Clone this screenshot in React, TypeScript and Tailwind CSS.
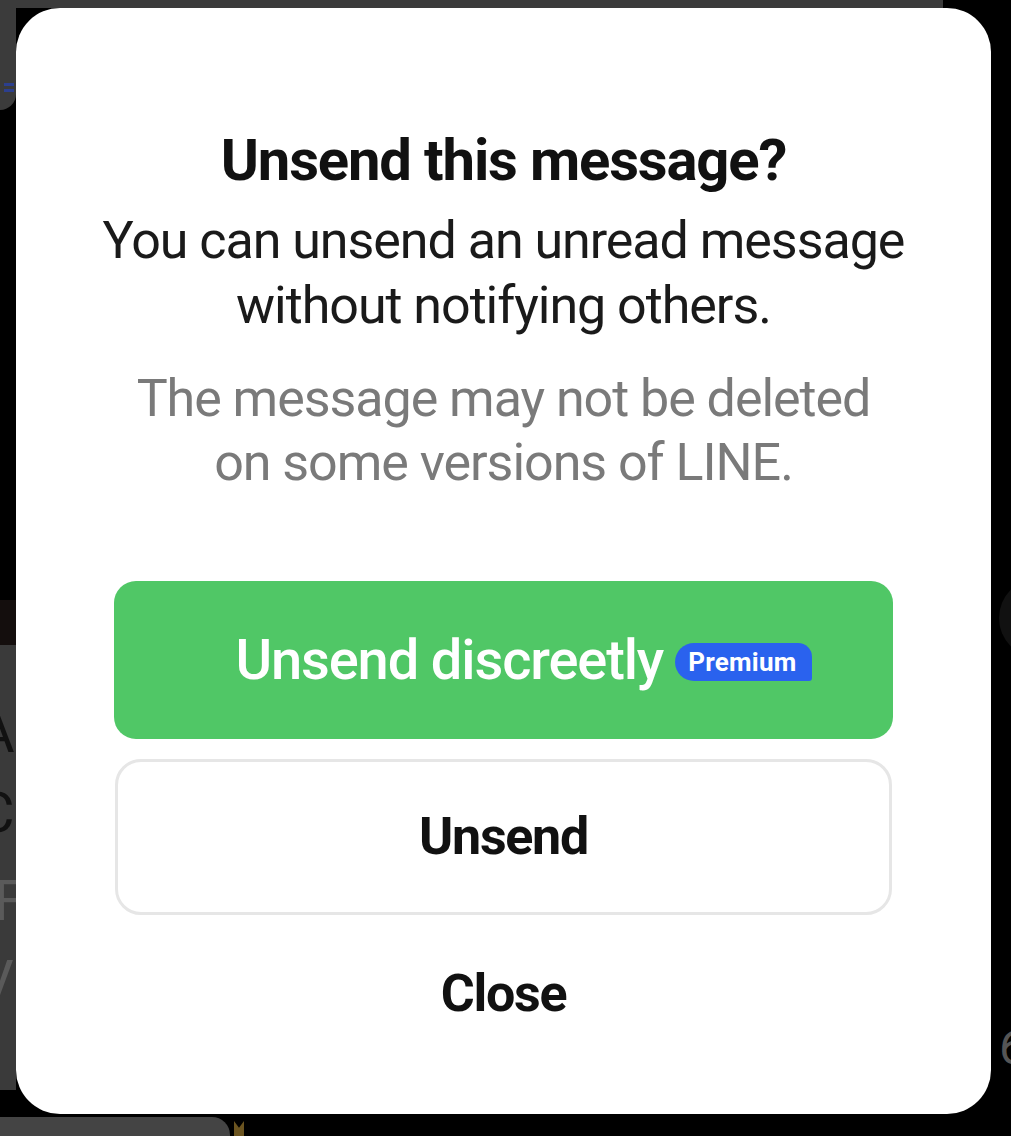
export default function App() {
  return (
    <div className="relative h-[1136px] w-[1011px] overflow-hidden bg-black font-['Roboto',sans-serif]">
      {/* Chat screen behind the dialog */}
      <div className="flex h-2">
        <div className="w-[943px] bg-[#3b3b3b]" />
        <div className="flex-1 bg-black" />
      </div>
      <div className="flex h-[1109px]">
        <div className="flex w-4 flex-col overflow-hidden">
          <div className="flex h-[102px] flex-col justify-end rounded-br-[30px] bg-[#3b3b3b] pb-[18px] pl-1">
            <div className="flex w-[10px] flex-col gap-[3px]">
              <div className="h-[3px] bg-[#2c3f8f]" />
              <div className="h-[3px] bg-[#2c3f8f]" />
            </div>
          </div>
          <div className="h-[490px] bg-black" />
          <div className="h-[45px] bg-[#140e0d]" />
          <div className="flex h-[445px] flex-col bg-[#3a3a3a] pt-[48px] text-[56px] leading-[80px] whitespace-nowrap">
            <span className="ml-[-22px] text-[#111]">A</span>
            <span className="ml-[-22px] text-[#111]">C</span>
            <span className="ml-[-6px] mt-2 text-[#5a5a5a]">F</span>
            <span className="ml-[-22px] text-[#5a5a5a]">V</span>
          </div>
          <div className="flex-1 bg-black" />
        </div>
        <div className="flex-1" />
        <div className="flex w-5 flex-col overflow-hidden">
          <div className="h-[570px]" />
          <div className="ml-2 h-[80px] w-[80px] rounded-full bg-[#111]" />
          <div className="h-[360px]" />
          <span className="ml-[8px] text-[48px] leading-[60px] text-[#555]">6</span>
        </div>
      </div>
      <div className="flex h-[19px] items-start">
        <div className="h-full w-[230px] rounded-tr-[18px] bg-[#444]" />
        <div className="ml-[4px] mt-[4px] h-[15px] w-[10px] bg-[#6b5420] [clip-path:polygon(0_0,50%_45%,100%_0,100%_100%,0_100%)]" />
      </div>

      {/* Dialog */}
      <div className="absolute left-4 top-2 flex h-[1106px] w-[975px] flex-col items-center rounded-[44px] bg-white pt-[120px] text-center">
        <h1 className="h-16 text-[58px] font-bold leading-[64px] tracking-[-0.02em] text-[#111]">
          Unsend this message?
        </h1>
        <p className="mt-[16px] text-[52px] leading-[65px] tracking-[-0.02em] text-[#1a1a1a]">
          You can unsend an unread message
          <br />
          without notifying others.
        </p>
        <p className="mt-[29px] text-[52px] leading-[64px] tracking-[-0.02em] text-[#7a7a7a]">
          The message may not be deleted
          <br />
          on some versions of LINE.
        </p>

        <button className="mt-[86px] flex h-[158px] w-[779px] items-center justify-center gap-3 rounded-[22px] bg-[#50c766] pl-10">
          <span className="text-[56px] font-medium tracking-[-0.02em] text-white">Unsend discreetly</span>
          <span className="mt-1 flex h-[38px] items-center rounded-l-[19px] rounded-tr-[14px] rounded-br-[3px] bg-[#2a62ee] pl-[13px] pr-[15px] text-[26px] font-bold leading-none tracking-[0.01em] text-white">
            Premium
          </span>
        </button>
        <button className="mt-5 flex h-[156px] w-[777px] items-center justify-center rounded-[26px] border-[3px] border-[#e6e6e6] bg-white">
          <span className="text-[52px] font-bold tracking-[-0.025em] text-[#111]">Unsend</span>
        </button>
        <button className="mt-[47px] text-[52px] font-bold leading-[64px] tracking-[-0.025em] text-[#111]">
          Close
        </button>
      </div>
    </div>
  );
}
